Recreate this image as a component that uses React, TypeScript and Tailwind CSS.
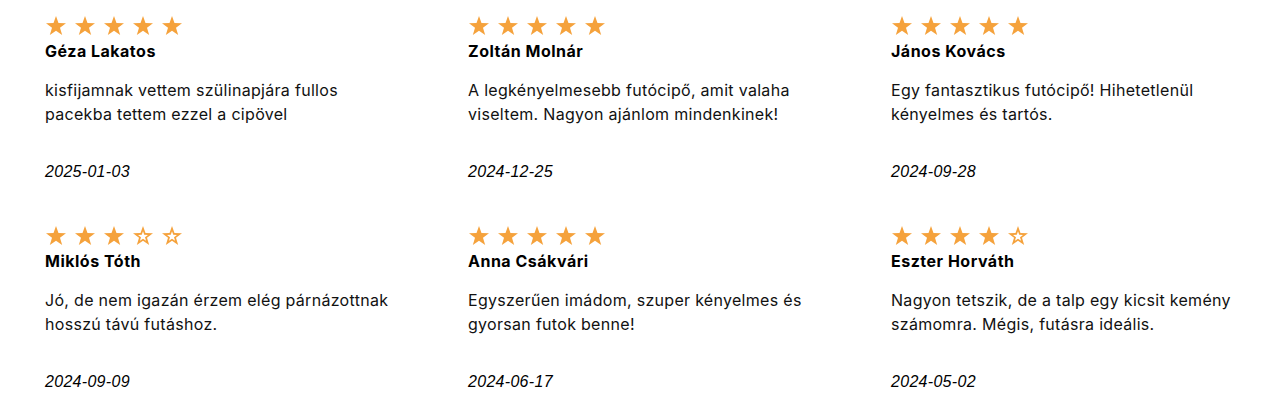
import React from "react";

type Review = { name: string; rating: number; text: string; date: string };

const reviews: Review[] = [
  { name: "Géza Lakatos", rating: 5, text: "kisfijamnak vettem szülinapjára fullos pacekba tettem ezzel a cipövel", date: "2025-01-03" },
  { name: "Zoltán Molnár", rating: 5, text: "A legkényelmesebb futócipő, amit valaha viseltem. Nagyon ajánlom mindenkinek!", date: "2024-12-25" },
  { name: "János Kovács", rating: 5, text: "Egy fantasztikus futócipő! Hihetetlenül kényelmes és tartós.", date: "2024-09-28" },
  { name: "Miklós Tóth", rating: 3, text: "Jó, de nem igazán érzem elég párnázottnak hosszú távú futáshoz.", date: "2024-09-09" },
  { name: "Anna Csákvári", rating: 5, text: "Egyszerűen imádom, szuper kényelmes és gyorsan futok benne!", date: "2024-06-17" },
  { name: "Eszter Horváth", rating: 4, text: "Nagyon tetszik, de a talp egy kicsit kemény számomra. Mégis, futásra ideális.", date: "2024-05-02" },
];

const STAR =
  "10,0 12.469,7.112 19.996,7.262 13.994,11.808 16.178,19.013 10,14.71 3.822,19.013 6.006,11.808 0.004,7.262 7.531,7.112";

function Star({ filled }: { filled: boolean }) {
  return (
    <svg width="20" height="20" viewBox="0 0 20 20" className="block">
      <polygon points={STAR} fill="#f5a23c" />
      {!filled && (
        <polygon
          points={STAR}
          fill="#ffffff"
          transform="translate(10 10.6) scale(0.5) translate(-10 -10.6)"
        />
      )}
    </svg>
  );
}

function Card({ r }: { r: Review }) {
  return (
    <div className="flex flex-col">
      <div className="flex h-5 gap-[9px] pl-px">
        {[0, 1, 2, 3, 4].map((i) => (
          <Star key={i} filled={i < r.rating} />
        ))}
      </div>
      <div className="mt-[3px] text-[16px] font-bold leading-6 tracking-[0.5px] text-black">{r.name}</div>
      <p className="mt-[15px] max-w-[352px] text-[16px] leading-6 tracking-[0.3px] text-[#111111]">{r.text}</p>
      <div
        className="mt-[34px] text-[16px] italic leading-6 tracking-[0.3px] text-black"
        style={{ fontFamily: '"Liberation Sans", Arial, sans-serif' }}
      >
        {r.date}
      </div>
    </div>
  );
}

export default function App() {
  return (
    <div
      className="min-h-[417px] w-full bg-white pl-[45px] pt-[16px]"
      style={{ fontFamily: 'Inter, "Noto Sans", sans-serif' }}
    >
      <div className="grid grid-cols-[393px_393px_393px] gap-x-[30px] gap-y-[42px]">
        {reviews.map((r) => (
          <Card key={r.name} r={r} />
        ))}
      </div>
    </div>
  );
}
